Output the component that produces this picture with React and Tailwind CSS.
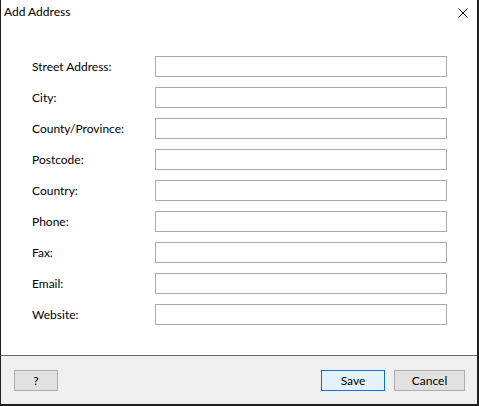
import React from "react";

const fields = [
  "Street Address:",
  "City:",
  "County/Province:",
  "Postcode:",
  "Country:",
  "Phone:",
  "Fax:",
  "Email:",
  "Website:",
];

const font = { fontFamily: '"Segoe UI", Lato, "Noto Sans", sans-serif' };

export default function App() {
  return (
    <div
      className="w-[479px] h-[406px] bg-white flex flex-col border-l border-r-2 border-b-2 border-[#1f1f1f] text-[12px] text-black"
      style={font}
    >
      <div className="h-[30px] flex justify-between shrink-0">
        <div className="pl-[3px] pt-[4px] leading-[16px]">Add Address</div>
        <div className="pt-[8px] pr-[9px]">
          <svg width="10" height="10" viewBox="0 0 10 10" className="block">
            <path d="M0.5 0.5 L9.5 9.5 M9.5 0.5 L0.5 9.5" stroke="#000" strokeWidth="1" fill="none" />
          </svg>
        </div>
      </div>
      <div className="flex-1 pt-[26px] pl-[31px] flex flex-col gap-[10px]">
        {fields.map((f) => (
          <div key={f} className="flex h-[21px] items-center">
            <div className="w-[123px] leading-[21px] whitespace-nowrap">{f}</div>
            <div className="w-[292px] h-[21px] border border-[#ababab] bg-white" />
          </div>
        ))}
      </div>
      <div className="h-[49px] shrink-0 border-t border-[#696969] bg-[#f0f0f0] pt-[14px] pl-[13px] pr-[12px] flex justify-between items-start">
        <button className="w-[44px] h-[21px] border border-[#adadad] bg-[#e1e1e1] leading-[19px] text-center">?</button>
        <div className="flex gap-[9px]">
          <button className="w-[64px] h-[21px] border border-[#0078d7] bg-[#e5f1fb] leading-[19px] text-center">Save</button>
          <button className="w-[71px] h-[21px] border border-[#adadad] bg-[#e1e1e1] leading-[19px] text-center">Cancel</button>
        </div>
      </div>
    </div>
  );
}
